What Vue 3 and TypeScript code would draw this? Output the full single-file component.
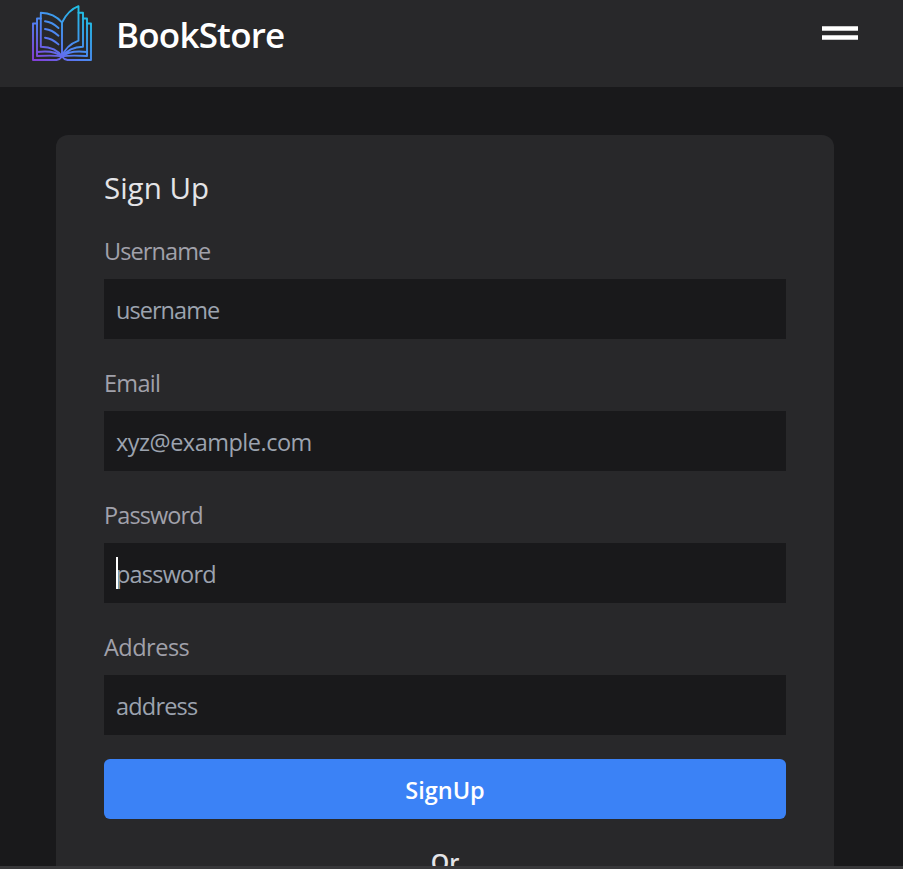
<script setup lang="ts">
import { ref } from 'vue'

interface Field {
  key: string
  label: string
  placeholder: string
  type: string
}

const fields: Field[] = [
  { key: 'username', label: 'Username', placeholder: 'username', type: 'text' },
  { key: 'email', label: 'Email', placeholder: 'xyz@example.com', type: 'text' },
  { key: 'password', label: 'Password', placeholder: 'password', type: 'password' },
  { key: 'address', label: 'Address', placeholder: 'address', type: 'text' },
]

const values = ref<Record<string, string>>({ username: '', email: '', password: '', address: '' })
const active = ref('password')
</script>

<template>
  <div class="page">
    <header class="navbar">
      <div class="brand">
        <svg class="logo" viewBox="0 0 60 56" fill="none" stroke="url(#book)" stroke-width="1.9" stroke-linejoin="round" stroke-linecap="round">
          <defs>
            <linearGradient id="book" gradientUnits="userSpaceOnUse" x1="4" y1="56" x2="48" y2="4">
              <stop offset="0" stop-color="#843fd8" />
              <stop offset="0.42" stop-color="#537ff2" />
              <stop offset="1" stop-color="#20bfe4" />
            </linearGradient>
          </defs>
          <path d="M30 51.500V17.500C25 11.500 18 8 8.800 7.700V41.700C18 42 26 45 30 51.500C33 43.500 39 38.500 46.500 35.700V1.200C39 4 34 9.500 30 17.500" />
          <path d="M8.800 13.500H5V51C14 50.500 23 50 30 51.500C37 50 46 50.500 55 51V13.500H51.200" />
          <path d="M5 18.500H1V55H24.500Q28 54.500 30 51.500Q32 54.500 35.500 55H59V18.500H55" />
          <path d="M46.500 7.700H51V41.700C42 42 35 45 30 51.500M5 47C14 45.800 24 46.500 30 51.500C36 46.500 46 45.800 55 47" />
          <path d="M13 16.300Q20 17 26.500 23M13 24Q20 24.700 26.500 30.700M13 32.700Q20 33.400 26.500 39.400" />
        </svg>
        <h1 class="name">BookStore</h1>
      </div>
      <button class="menu" aria-label="Menu">
        <span class="line"></span>
        <span class="line"></span>
      </button>
    </header>

    <main class="content">
      <form class="card" @submit.prevent>
        <h2 class="title">Sign Up</h2>
        <div v-for="f in fields" :key="f.key" class="field">
          <label class="label" :class="'l-' + f.key" :for="f.key">{{ f.label }}</label>
          <div class="control">
            <input
              :id="f.key"
              v-model="values[f.key]"
              class="input"
              :class="'i-' + f.key"
              :type="f.type"
              :placeholder="f.placeholder"
            />
            <span v-if="active === f.key" class="caret"></span>
          </div>
        </div>
        <button class="submit">SignUp</button>
        <p class="or">Or</p>
      </form>
    </main>
    <footer class="edge"></footer>
  </div>
</template>

<style>
body {
  background: #18181b;
  overflow: hidden;
}
</style>

<style scoped>
.page {
  display: flex;
  flex-direction: column;
  height: 869px;
  overflow: hidden;
  background: #19191b;
  color: #fff;
  font-family: 'Open Sans', 'Noto Sans', sans-serif;
}
.navbar {
  display: flex;
  flex: none;
  justify-content: space-between;
  height: 87px;
  padding: 0 45px 0 32px;
  box-sizing: border-box;
  background: #28282a;
}
.brand {
  display: flex;
  align-items: flex-start;
}
.logo {
  width: 60px;
  height: 56px;
  margin-top: 5px;
}
.name {
  margin: 11px 0 0 24px;
  font-size: 35px;
  line-height: 48px;
  font-weight: 600;
  letter-spacing: -0.8px;
}
.menu {
  display: flex;
  flex-direction: column;
  gap: 4px;
  align-self: flex-start;
  margin: 26px 0 0;
  padding: 0;
  border: 0;
  background: none;
}
.line {
  width: 36px;
  height: 5px;
  box-sizing: border-box;
  border: solid #c8c8c9;
  border-width: 1px 0;
  background: #fff;
}
.content {
  flex: 1;
  min-height: 0;
  overflow: hidden;
  padding: 48px 69px 0 56px;
}
.card {
  display: flex;
  flex-direction: column;
  padding: 30px 48px;
  border-radius: 12px;
  background: #28282a;
}
.title {
  height: 44px;
  margin: 0;
  font-size: 29.5px;
  line-height: 46px;
  font-weight: 400;
  color: #e4e4e7;
}
.field {
  display: flex;
  flex-direction: column;
  gap: 10px;
  margin-top: 24px;
}
.title + .field {
  margin-top: 22px;
}
.label {
  height: 38px;
  line-height: 40px;
  font-size: 23.5px;
  letter-spacing: -0.9px;
  color: #a1a1aa;
}
.l-email {
  letter-spacing: -0.7px;
}
.l-address {
  letter-spacing: -0.5px;
}
.control {
  position: relative;
  display: flex;
}
.input {
  width: 100%;
  height: 60px;
  box-sizing: border-box;
  padding: 2px 12px 0;
  border: 0;
  outline: none;
  background: #19191b;
  color: #f4f4f5;
  font-family: inherit;
  font-size: 23.5px;
  letter-spacing: -0.8px;
}
.i-username {
  letter-spacing: -0.95px;
}
.i-email {
  letter-spacing: -0.5px;
}
.input::placeholder {
  color: #9ca3af;
  opacity: 1;
}
.caret {
  position: absolute;
  left: 12px;
  top: 14px;
  width: 2px;
  height: 32px;
  background: #fff;
}
.submit {
  height: 60px;
  margin-top: 24px;
  padding: 1px 0 0;
  border: 0;
  border-radius: 6px;
  background: #3b82f6;
  color: #fff;
  font-family: inherit;
  font-size: 23.5px;
  font-weight: 600;
}
.or {
  margin: 25px 0 0;
  font-size: 23.5px;
  line-height: 36px;
  font-weight: 600;
  text-align: center;
  color: #e4e4e7;
}
.edge {
  flex: none;
  height: 3px;
  background: #38383a;
}
</style>
